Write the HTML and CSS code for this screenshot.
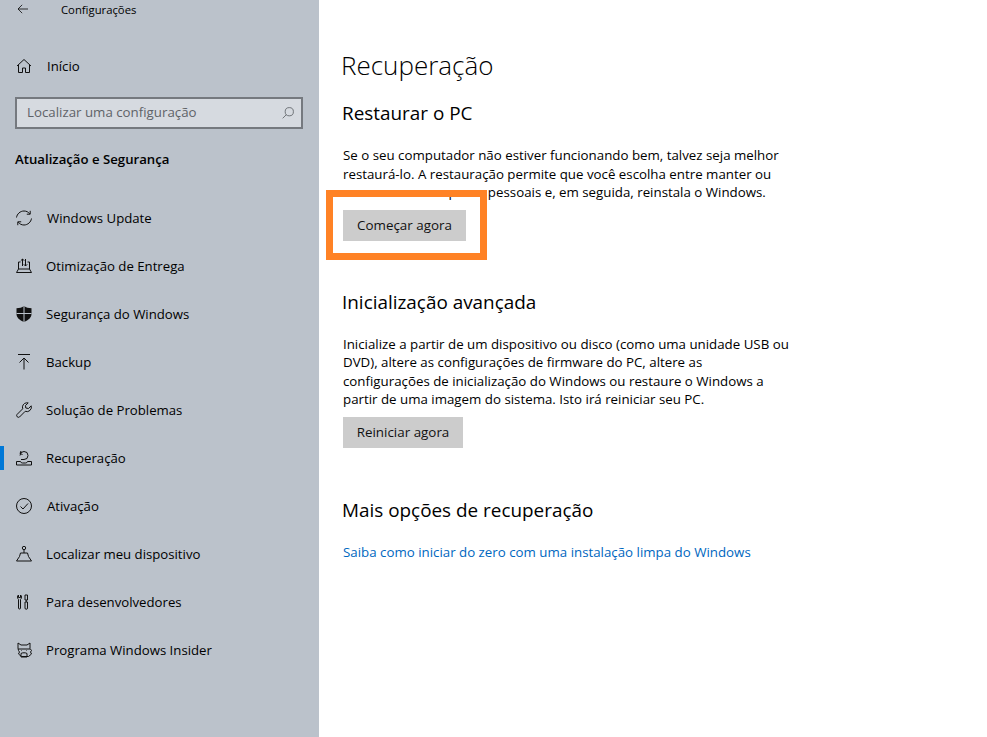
FILE: index.html
```html
<!DOCTYPE html>
<html lang="pt-BR">

<head>
  <meta charset="UTF-8">
  <title>Configurações</title>
  <link rel="stylesheet" href="styles.css">
</head>

<body>
  <aside class="sidebar">
    <div class="app-bar">
      <svg class="back-icon" viewBox="0 0 14 12"><path d="M6 1 1 6l5 5M1 6h12"/></svg>
      <span class="app-title">Configurações</span>
    </div>
    <a class="home-row">
      <svg class="icon" viewBox="0 0 16 16"><path d="M1 8 8 1.500 15 8M2.500 7v7.500h4V10h3v4.500h4V7"/></svg>
      <span class="home-label">Início</span>
    </a>
    <div class="search">
      <span class="search-text">Localizar uma configuração</span>
      <svg class="search-icon" viewBox="0 0 14 14"><circle cx="8.500" cy="5.500" r="4.800"/><path d="M5 9 .8 13.200"/></svg>
    </div>
    <div class="section-title">Atualização e Segurança</div>
    <nav class="nav">
      <a class="nav-item">
        <svg class="icon" viewBox="0 0 16 16"><path d="M.5 7.500C1 4 4.200 1 8 1c2.400 0 4.400 1 5.700 2.800M15.500 8.500C15 12 11.800 15 8 15c-2.400 0-4.400-1-5.700-2.800M14.200 .8v3.400h-3.400M1.800 15.200v-3.400h3.400"/></svg>
        <span class="nav-label-offset">Windows Update</span>
      </a>
      <a class="nav-item">
        <svg class="icon" viewBox="0 0 16 16"><path d="M2.500 11V4h2M13.500 11V4h-2M.5 14.500h15l-2-3.500h-11zM6.500 8V1M4.800 2.700 6.500 1l1.700 1.700M9.500 1v7M7.800 6.300 9.500 8l1.700-1.700"/></svg>
        <span>Otimização de Entrega</span>
      </a>
      <a class="nav-item">
        <svg class="icon" viewBox="0 0 16 16"><path class="solid" d="M8 0c2 1.500 4.500 2.200 7.500 2.200V8c0 3.500-3 6.200-7.500 8C3.500 14.200.5 11.500.5 8V2.200C3.500 2.200 6 1.500 8 0z"/><path class="gap" d="M8 0v16M.5 7.500h15"/></svg>
        <span>Segurança do Windows</span>
      </a>
      <a class="nav-item">
        <svg class="icon" viewBox="0 0 16 16"><path d="M2 .5h12M8 15.500V4M3.500 8.500 8 4l4.500 4.500"/></svg>
        <span>Backup</span>
      </a>
      <a class="nav-item">
        <svg class="icon" viewBox="0 0 16 16"><path d="M10.500.8a4.500 4.500 0 0 0-3.800 6L1 12.500a1.800 1.800 0 0 0 2.500 2.500l5.700-5.700a4.500 4.500 0 0 0 6-5.500L12.500 6.500 9.800 6 9.500 3.500l2.700-2.600z"/></svg>
        <span>Solução de Problemas</span>
      </a>
      <a class="nav-item active">
        <svg class="icon" viewBox="0 0 16 16"><path d="M.5 11.500h4a2 2 0 0 0 2 1.500h3a2 2 0 0 0 2-1.500h4v3.500H.5zM4 5.500A4 4 0 1 1 8 9.500H5M5 1l-1 2.500 2.500 1"/></svg>
        <span>Recuperação</span>
      </a>
      <a class="nav-item">
        <svg class="icon" viewBox="0 0 16 16"><circle cx="8" cy="8" r="7.500"/><path d="m4.500 8.500 2.500 2.500 5-5.500"/></svg>
        <span class="nav-label-offset">Ativação</span>
      </a>
      <a class="nav-item">
        <svg class="icon" viewBox="0 0 16 16"><circle cx="8" cy="2" r="1.700"/><path d="M8 3.700V7M4.500 7h7l1 3.500 3 4.500H.5l3-4.500z"/></svg>
        <span>Localizar meu dispositivo</span>
      </a>
      <a class="nav-item">
        <svg class="icon" viewBox="1.500 0 16 16"><path d="M4 1v2.500h2V1a2.200 2.200 0 0 1 1 2c0 1.200-.5 2-1 2.400V14a1 1 0 0 1-2 0V5.400C3.500 5 3 4.200 3 3a2.200 2.200 0 0 1 1-2zM10.500 1h2.500v5h-2.500zM11.750 6v2M10.500 8H13v6a1.250 1.250 0 0 1-2.500 0z"/></svg>
        <span>Para desenvolvedores</span>
      </a>
      <a class="nav-item">
        <svg class="icon" viewBox="0 0 16 16"><path d="M2 1l3 2h6l3-2v5.500l1.500 2-1 1.500 1 2-3 2.500h-7l-3-2.500 1-2-1-1.500L2 6.500zM2 7h12M5 11.500c1-1 5-1 6 0v3.500H5zM5.500 8.500v.5M10.500 8.500v.5"/></svg>
        <span>Programa Windows Insider</span>
      </a>
    </nav>
  </aside>

  <main class="content">
    <h1>Recuperação</h1>

    <section class="reset-section">
      <h2>Restaurar o PC</h2>
      <p>Se o seu computador não estiver funcionando bem, talvez seja melhor restaurá-lo. A restauração permite que você escolha entre manter ou remover seus arquivos pessoais e, em seguida, reinstala o Windows.</p>
      <button class="action start-button" type="button">Começar agora</button>
      <div class="highlight"></div>
    </section>

    <section class="advanced-section">
      <h2>Inicialização avançada</h2>
      <p>Inicialize a partir de um dispositivo ou disco (como uma unidade USB ou<br>DVD), altere as configurações de firmware do PC, altere as<br>configurações de inicialização do Windows ou restaure o Windows a<br>partir de uma imagem do sistema. Isto irá reiniciar seu PC.</p>
      <button class="action restart-button" type="button">Reiniciar agora</button>
    </section>

    <section class="more-section">
      <h2>Mais opções de recuperação</h2>
      <a class="link">Saiba como iniciar do zero com uma instalação limpa do Windows</a>
    </section>
  </main>
</body>

</html>
```

FILE: styles.css
```css
html,
body {
  margin: 0;
  height: 100%;
}

body {
  display: flex;
  height: 737px;
  overflow: hidden;
  background-color: #fff;
  color: #000;
  font-family: "Open Sans", "Noto Sans", sans-serif;
  font-size: 13.300px;
}

svg {
  fill: none;
  stroke: #111;
  stroke-width: 1;
  flex-shrink: 0;
}

.sidebar {
  width: 319px;
  flex-shrink: 0;
  background-color: #bbc2cb;
  font-size: 13.200px;
}

.app-bar {
  display: flex;
  align-items: center;
  height: 18px;
  padding-left: 17px;
}

.back-icon {
  width: 12px;
  height: 10px;
}

.app-title {
  margin-left: 32px;
  font-size: 11.300px;
}

.home-row {
  display: flex;
  align-items: center;
  height: 48px;
  margin-top: 24px;
  padding-left: 16px;
}

.home-label {
  margin-left: 15px;
}

.icon {
  width: 16px;
  height: 16px;
}

.search {
  display: flex;
  justify-content: space-between;
  align-items: center;
  box-sizing: border-box;
  width: 288px;
  height: 32px;
  margin: 7px 0 0 15px;
  padding: 0 7px 0 10px;
  background-color: #d6dae0;
  border: 2px solid #75797f;
  color: #5f6368;
}

.search-text {
  margin-bottom: 2px;
  font-size: 13.300px;
}

.search-icon {
  width: 12px;
  height: 12px;
  stroke: #5f6368;
}

.section-title {
  margin: 20px 0 0 15px;
  font-weight: 600;
  line-height: 20px;
}

.nav {
  margin-top: 25px;
}

.nav-item {
  position: relative;
  display: flex;
  align-items: center;
  gap: 14px;
  height: 48px;
  padding-left: 16px;
}

.nav-label-offset {
  margin-left: 1px;
}

.nav-item.active::before {
  content: "";
  position: absolute;
  left: 0;
  top: 12px;
  width: 4px;
  height: 24px;
  background-color: #0078d7;
}

.solid {
  fill: #111;
  stroke: none;
}

.gap {
  stroke: #bbc2cb;
}

.content {
  flex: 1;
  padding: 43px 0 0 22px;
}

h1 {
  margin: 0;
  font-size: 26px;
  font-weight: 300;
  line-height: 44px;
}

h2 {
  margin: 0 0 0 1px;
  font-size: 18.900px;
  font-weight: 400;
  line-height: 26px;
}

p {
  width: 465px;
  margin: 20px 0 0 2px;
  line-height: 18.500px;
}

.action {
  display: block;
  height: 31px;
  margin: 8px 0 0 2px;
  padding: 0;
  background-color: #ccc;
  border: none;
  color: #111;
  font-family: inherit;
  font-size: 13.400px;
}

.start-button {
  width: 123px;
}

.restart-button {
  width: 120px;
}

.reset-section {
  position: relative;
  margin-top: 13px;
}

/* orange callout drawn over the text, the white edge hides the top of the covered line */
.highlight {
  position: absolute;
  left: -15px;
  top: 90px;
  width: 147px;
  height: 56px;
  border: 7px solid #ff8225;
  box-shadow: 0 -4px 0 #fff;
}

.advanced-section {
  margin-top: 48px;
}

.more-section {
  margin-top: 49px;
}

.link {
  display: block;
  margin: 20px 0 0 2px;
  color: #0067c0;
}
```
